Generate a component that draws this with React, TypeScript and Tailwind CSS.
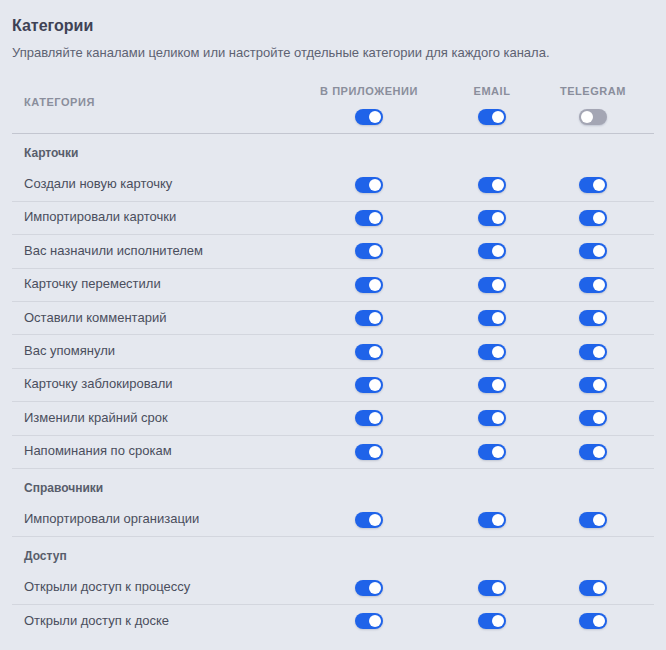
import React from 'react';

type Row = { label: string; app: boolean; email: boolean; telegram: boolean };
type Group = { title: string; rows: Row[] };

const on = (label: string): Row => ({ label, app: true, email: true, telegram: true });

const groups: Group[] = [
  {
    title: 'Карточки',
    rows: [
      on('Создали новую карточку'),
      on('Импортировали карточки'),
      on('Вас назначили исполнителем'),
      on('Карточку переместили'),
      on('Оставили комментарий'),
      on('Вас упомянули'),
      on('Карточку заблокировали'),
      on('Изменили крайний срок'),
      on('Напоминания по срокам'),
    ],
  },
  { title: 'Справочники', rows: [on('Импортировали организации')] },
  { title: 'Доступ', rows: [on('Открыли доступ к процессу'), on('Открыли доступ к доске')] },
];

function Toggle({ checked }: { checked: boolean }) {
  return (
    <span
      className={`inline-flex h-4 w-7 items-center rounded-full p-0.5 shadow-[0_1px_2px_rgba(30,40,80,0.18)] ${
        checked ? 'justify-end bg-[#1f63e9]' : 'justify-start bg-[#a4a6b4]'
      }`}
    >
      <span className="h-3 w-3 rounded-full bg-white" />
    </span>
  );
}

const cols = 'grid grid-cols-[1fr_142px_104px_98px] px-3';

export default function App() {
  let total = 0;
  const count = groups.reduce((n, g) => n + g.rows.length, 0);

  return (
    <div className="min-h-screen bg-[#e5e8ef] px-3 pt-4 font-['Liberation_Sans',Arial,sans-serif]">
      <h2 className="text-[16px] font-bold leading-[20px] text-[#3e4255]">Категории</h2>
      <p className="mt-[8px] text-[13px] leading-[18px] text-[#5d6272]">
        Управляйте каналами целиком или настройте отдельные категории для каждого канала.
      </p>

      <div className="mt-[16px]">
        <div className={`${cols} border-b border-[#c3c6d0] pt-1.5 pb-2`}>
          <div className="flex items-center pb-1 text-[11px] font-bold uppercase tracking-[0.05em] text-[#8a8e9c]">
            Категория
          </div>
          {['В приложении', 'Email', 'Telegram'].map((c, i) => (
            <div key={c} className="flex flex-col items-center">
              <span className="text-[11px] leading-[14px] font-bold uppercase tracking-[0.05em] text-[#8a8e9c]">{c}</span>
              <span className="mt-[11px] flex">
                <Toggle checked={i !== 2} />
              </span>
            </div>
          ))}
        </div>

        {groups.map((g) => (
          <div key={g.title}>
            <div className="flex h-[34.5px] items-center px-3 pt-1 text-[12px] font-bold text-[#585d6b]">{g.title}</div>
            {g.rows.map((r) => {
              total += 1;
              const last = total === count;
              return (
                <div
                  key={r.label}
                  className={`${cols} h-[33.4px] items-center ${last ? '' : 'border-b border-[#d3d6de]'}`}
                >
                  <span className="-mt-0.5 text-[13px] text-[#4a4e5d]">{r.label}</span>
                  <span className="flex justify-center">
                    <Toggle checked={r.app} />
                  </span>
                  <span className="flex justify-center">
                    <Toggle checked={r.email} />
                  </span>
                  <span className="flex justify-center">
                    <Toggle checked={r.telegram} />
                  </span>
                </div>
              );
            })}
          </div>
        ))}
      </div>
    </div>
  );
}
